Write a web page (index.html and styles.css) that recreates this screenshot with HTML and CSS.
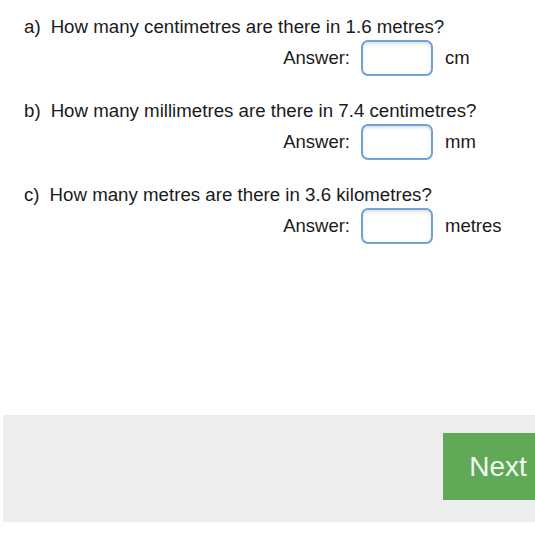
FILE: index.html
```html
<!DOCTYPE html>
<html>
<head>
<meta charset="utf-8">
<link rel="stylesheet" href="styles.css">
</head>
<body>
<div class="questions">
  <div class="item">
    <div class="question"><span class="label">a)</span>How many centimetres are there in 1.6 metres?</div>
    <div class="answer-row">
      <span class="answer-label">Answer:</span>
      <input class="answer-input" type="text">
      <span class="unit">cm</span>
    </div>
  </div>
  <div class="item">
    <div class="question"><span class="label">b)</span>How many millimetres are there in 7.4 centimetres?</div>
    <div class="answer-row">
      <span class="answer-label">Answer:</span>
      <input class="answer-input" type="text">
      <span class="unit">mm</span>
    </div>
  </div>
  <div class="item">
    <div class="question"><span class="label">c)</span>How many metres are there in 3.6 kilometres?</div>
    <div class="answer-row">
      <span class="answer-label">Answer:</span>
      <input class="answer-input" type="text">
      <span class="unit">metres</span>
    </div>
  </div>
</div>
<div class="footer">
  <button class="next-btn" type="button">Next</button>
</div>
</body>
</html>
```
FILE: styles.css
```css
html, body {
  margin: 0;
  padding: 0;
  background: #ffffff;
  overflow: hidden;
}
body {
  font-family: "Liberation Sans", Arial, sans-serif;
  color: #1a1a1a;
  width: 535px;
}
.questions {
  padding: 16px 0 0 24px;
  display: flex;
  flex-direction: column;
  gap: 24px;
}
.item {
  display: flex;
  flex-direction: column;
  gap: 2px;
}
.question {
  font-size: 18.7px;
  line-height: 21px;
  white-space: nowrap;
}
.label {
  margin-right: 10px;
}
.answer-row {
  display: flex;
  align-items: center;
  height: 37px;
}
.answer-label {
  width: 326px;
  text-align: right;
  font-size: 18.5px;
}
.answer-input {
  box-sizing: border-box;
  width: 72px;
  height: 36px;
  margin: 0 0 0 11px;
  border: 2px solid #6ea2d9;
  border-radius: 7px;
  box-shadow: inset 0 2px 3px rgba(0, 0, 0, 0.12);
  background: #fff;
  outline: none;
}
.unit {
  margin-left: 12px;
  font-size: 18.5px;
}
.footer {
  margin: 171px 0 0 3px;
  height: 107px;
  background: #ededed;
  display: flex;
  justify-content: flex-end;
  align-items: flex-start;
  padding-top: 18px;
  box-sizing: border-box;
  overflow: hidden;
}
.next-btn {
  width: 110px;
  height: 67px;
  margin-right: -18px;
  flex-shrink: 0;
  border: none;
  background: #60a957;
  color: #f4fbf2;
  font-family: "Liberation Sans", Arial, sans-serif;
  font-size: 28px;
  padding: 0;
  text-align: center;
}
```
